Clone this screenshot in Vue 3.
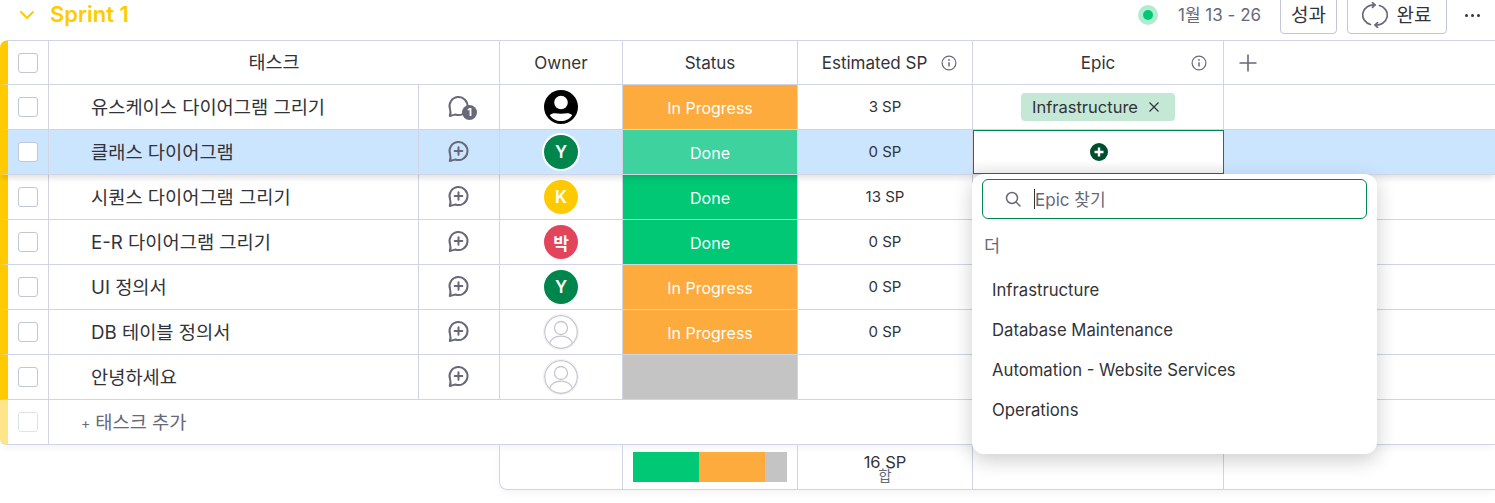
<template>
  <div class="page">
    <!-- group header -->
    <div class="topbar">
      <svg class="chevron" width="18" height="18" viewBox="0 0 18 18"><path d="M3 6l6 6 6-6" fill="none" stroke="#ffcb00" stroke-width="2" stroke-linecap="round" stroke-linejoin="round"/></svg>
      <span class="title">Sprint 1</span>
      <div class="spacer"></div>
      <span class="live"><span class="live-dot"></span></span>
      <span class="dates">1월 13 - 26</span>
      <button class="btn btn-result">성과</button>
      <button class="btn btn-done">
        <svg width="26" height="26" viewBox="0 0 26 26" fill="none" stroke="#676879" stroke-width="1.7" stroke-linecap="round" stroke-linejoin="round">
          <path d="M8.500 22.500A11 10 0 0 1 13 3"/>
          <path d="M10.500 .6l2.500 2.400-2.500 2.400"/>
          <path d="M17.500 3.500A11 10 0 0 1 13 23"/>
          <path d="M15.500 20.600l-2.500 2.400 2.500 2.400"/>
        </svg>
        <span>완료</span>
      </button>
      <span class="more"><i></i><i></i><i></i></span>
    </div>

    <!-- column titles -->
    <div class="row head">
      <div class="cell"><span class="check"></span></div>
      <div class="cell span-name title-ko">태스크</div>
      <div class="cell">Owner</div>
      <div class="cell">Status</div>
      <div class="cell with-info">
        <span>Estimated SP</span>
        <svg class="info" width="16" height="16" viewBox="0 0 16 16" fill="none" stroke="#676879" stroke-width="1.2"><circle cx="8" cy="8" r="6.9"/><path d="M8 7.2v4.2" stroke-width="1.5"/><circle cx="8" cy="4.9" r=".9" fill="#676879" stroke="none"/></svg>
      </div>
      <div class="cell epic-head">
        <span>Epic</span>
        <svg class="info abs-info" width="16" height="16" viewBox="0 0 16 16" fill="none" stroke="#676879" stroke-width="1.2"><circle cx="8" cy="8" r="6.9"/><path d="M8 7.2v4.2" stroke-width="1.5"/><circle cx="8" cy="4.9" r=".9" fill="#676879" stroke="none"/></svg>
      </div>
      <div class="cell last add-col">
        <svg width="20" height="20" viewBox="0 0 20 20" stroke="#676879" stroke-width="1.6"><path d="M10 1.5v17M1.5 10h17"/></svg>
      </div>
    </div>

    <!-- tasks -->
    <div v-for="(task, i) in tasks" :key="task.name" class="row" :class="{ selected: i === 1 }">
      <div class="cell"><span class="check"></span></div>
      <div class="cell name">{{ task.name }}</div>
      <div class="cell chat">
        <svg width="24" height="24" viewBox="0 0 24 24" fill="none" stroke="#676879" stroke-width="2" stroke-linecap="round" stroke-linejoin="round">
          <path d="M3 14A9 9 0 1 1 8.400 19.500C6.600 20 5 20.400 2.800 21C3.700 18.800 3.800 16.300 3 14Z"/>
          <path v-if="!task.comments" d="M11.500 7.200v7.600M7.700 11h7.600"/>
        </svg>
        <span v-if="task.comments" class="badge">{{ task.comments }}</span>
      </div>
      <div class="cell">
        <svg v-if="task.owner === 'me'" width="34" height="34" viewBox="0 0 34 34">
          <circle cx="17" cy="17" r="17" fill="#000"/>
          <circle cx="17" cy="12.500" r="6.800" fill="#fff"/>
          <path d="M5.800 25.200C9 22 13 23.800 17 23.800S25 22 28.200 25.200C25.800 28.900 21.600 31 17 31S8.200 28.900 5.800 25.200Z" fill="#fff"/>
        </svg>
        <svg v-else-if="task.owner === 'none'" class="ghost" width="34" height="34" viewBox="0 0 34 34" fill="none" stroke="#c5c7d0" stroke-width="1.300">
          <circle cx="17" cy="17" r="16.300"/>
          <circle cx="17" cy="13" r="6.500"/>
          <path d="M5.500 28.500C7.500 23 12 21.200 17 21.200S26.500 23 28.500 28.500"/>
        </svg>
        <span v-else class="avatar" :class="{ ring: i === 1 }" :style="{ background: task.color }">{{ task.owner }}</span>
      </div>
      <div class="cell status" :style="{ background: task.status ? statusColor(task.status, i) : '#c4c4c4' }">{{ task.status }}</div>
      <div class="cell sp">{{ task.sp }}</div>
      <div class="cell epic" :class="{ active: i === 1 }">
        <span v-if="i === 0" class="tag">
          Infrastructure
          <svg width="12" height="12" viewBox="0 0 12 12" stroke="#323338" stroke-width="1.200"><path d="M1.500 1.500l9 9M10.500 1.500l-9 9"/></svg>
        </span>
        <template v-if="i === 1">
          <svg width="20" height="20" viewBox="0 0 20 20"><circle cx="10" cy="10" r="9" fill="#004d2e"/><path d="M10 5.500v9M5.500 10h9" stroke="#fff" stroke-width="2.400"/></svg>
          <!-- epic picker -->
          <div class="popup">
            <div class="search">
              <svg width="18" height="18" viewBox="0 0 18 18" fill="none" stroke="#676879" stroke-width="1.500" stroke-linecap="round"><circle cx="8" cy="8" r="5.500"/><path d="M12 12l4 4"/></svg>
              <span class="caret"></span>
              <span class="placeholder">Epic 찾기</span>
            </div>
            <div class="more-label">더</div>
            <ul class="options">
              <li v-for="epic in epics" :key="epic">{{ epic }}</li>
            </ul>
          </div>
        </template>
      </div>
      <div class="cell last"></div>
    </div>

    <div class="row add">
      <div class="cell"><span class="check faded"></span></div>
      <div class="cell add-task"><small>+</small> 태스크 추가</div>
    </div>

    <!-- summary -->
    <div class="summary">
      <div class="cell"></div>
      <div class="cell bar-cell">
        <div class="bar">
          <span v-for="part in summary" :key="part.color" :style="{ width: part.width + 'px', background: part.color }"></span>
        </div>
      </div>
      <div class="cell total"><span>16 SP</span><small>합</small></div>
      <div class="cell"></div>
      <div class="cell last"></div>
    </div>
  </div>
</template>

<script setup>
const tasks = [
  { name: '유스케이스 다이어그램 그리기', comments: 1, owner: 'me', status: 'In Progress', sp: '3 SP' },
  { name: '클래스 다이어그램', owner: 'Y', color: '#00854d', status: 'Done', sp: '0 SP' },
  { name: '시퀀스 다이어그램 그리기', owner: 'K', color: '#ffcb00', status: 'Done', sp: '13 SP' },
  { name: 'E-R 다이어그램 그리기', owner: '박', color: '#e2445c', status: 'Done', sp: '0 SP' },
  { name: 'UI 정의서', owner: 'Y', color: '#00854d', status: 'In Progress', sp: '0 SP' },
  { name: 'DB 테이블 정의서', owner: 'none', status: 'In Progress', sp: '0 SP' },
  { name: '안녕하세요', owner: 'none', status: '', sp: '' },
]

const epics = ['Infrastructure', 'Database Maintenance', 'Automation - Website Services', 'Operations']

const summary = [
  { width: 66, color: '#00c875' },
  { width: 66, color: '#fdab3d' },
  { width: 22, color: '#c4c4c4' },
]

function statusColor(status, index) {
  if (status === 'Done') return index === 1 ? '#3dd29e' : '#00c875'
  return '#fdab3d'
}
</script>

<style>
html, body {
  margin: 0;
  background: #fff;
}
</style>

<style scoped>
.page {
  width: 1495px;
  height: 503px;
  overflow: hidden;
  font-family: "Inter", "Noto Sans CJK KR", sans-serif;
  color: #323338;
  font-size: 15px;
}

.topbar {
  height: 40px;
  display: flex;
  align-items: flex-start;
  overflow: hidden;
  padding-right: 15px;
  box-sizing: border-box;
}
.chevron {
  margin: 6px 0 0 18px;
}
.title {
  margin-left: 14px;
  font-size: 22px;
  line-height: 29px;
  font-weight: 600;
  color: #ffcb00;
}
.spacer {
  flex: 1;
}
.live {
  width: 20px;
  height: 20px;
  margin-top: 5px;
  border-radius: 50%;
  background: #b0ecd0;
  display: flex;
  align-items: center;
  justify-content: center;
}
.live-dot {
  width: 10px;
  height: 10px;
  border-radius: 50%;
  background: #00c875;
}
.dates {
  margin-left: 20px;
  width: 102px;
  font-size: 17px;
  line-height: 30px;
  color: #676879;
}
.btn {
  height: 42px;
  margin-top: -8px;
  border: 1px solid #c3c6d4;
  border-radius: 4px;
  background: #fff;
  font: inherit;
  font-size: 19px;
  color: #323338;
  display: flex;
  align-items: center;
  justify-content: center;
}
.btn-result {
  width: 57px;
  padding: 0;
}
.btn-done {
  width: 100px;
  margin-left: 10px;
  padding: 0 0 0 1px;
  gap: 9px;
}
.btn-done svg {
  margin: 3px 0 0 -2px;
}
.more {
  margin: 14px 0 0 18px;
  display: flex;
  gap: 3px;
}
.more i {
  width: 3px;
  height: 3px;
  border-radius: 50%;
  background: #323338;
}

.row {
  display: grid;
  grid-template-columns: 41px 370px 81px 123px 175px 175px 251px 1fr;
  height: 45px;
  box-sizing: border-box;
  border-left: 8px solid #ffcb00;
  border-bottom: 1px solid #d0d4e4;
}
.row.head {
  border-top: 1px solid #d0d4e4;
  border-top-left-radius: 8px;
}
.head .cell {
  font-size: 17px;
}
.head .title-ko {
  font-size: 18.500px;
  padding-bottom: 4px;
  box-sizing: border-box;
}
.span-name {
  grid-column: span 2;
}
.cell {
  border-right: 1px solid #d0d4e4;
  display: flex;
  align-items: center;
  justify-content: center;
  min-width: 0;
  position: relative;
}
.cell.last {
  border-right: 0;
}
.check {
  width: 20px;
  height: 20px;
  box-sizing: border-box;
  border: 1px solid #c3c6d4;
  border-radius: 3px;
  background: #fff;
}
.check.faded {
  opacity: 0.5;
}

.with-info {
  gap: 14px;
  padding-left: 9px;
  box-sizing: border-box;
}
.epic-head .abs-info {
  position: absolute;
  right: 16px;
}
.add-col {
  justify-content: flex-start;
  padding-left: 14px;
}

.selected {
  background: #cce5ff;
  box-shadow: 0 4px 6px -1px rgba(0, 0, 0, 0.12);
  position: relative;
  z-index: 2;
}
.name {
  justify-content: flex-start;
  padding: 0 0 3px 42px;
  box-sizing: border-box;
  font-size: 18.700px;
  color: #323338;
}
.badge {
  position: absolute;
  left: 43px;
  top: 20px;
  width: 15px;
  height: 15px;
  border-radius: 50%;
  background: #676879;
  color: #fff;
  font-size: 11px;
  font-weight: 700;
  line-height: 15px;
  text-align: center;
}
.avatar {
  width: 34px;
  height: 34px;
  border-radius: 50%;
  color: #fff;
  font-size: 17px;
  font-weight: 600;
  display: flex;
  align-items: center;
  justify-content: center;
}
.avatar.ring {
  box-shadow: 0 0 0 2px #fff;
}
.ghost {
  border-radius: 50%;
  box-shadow: 0 0 0 1px #f0f1f4;
  background: #fff;
}
.status {
  color: #fff;
  font-size: 16px;
  border-right: 1px solid #d0d4e4;
  padding-top: 2px;
  box-sizing: border-box;
}
.sp {
  font-size: 15px;
  padding-bottom: 2px;
  box-sizing: border-box;
}
.tag {
  height: 28px;
  padding: 0 15px 0 11px;
  border-radius: 4px;
  background: #c5e8d6;
  font-size: 16.500px;
  display: flex;
  align-items: center;
  gap: 10px;
}
.epic.active {
  background: linear-gradient(#fff 70%, #f3f3f3);
  border: 1px solid #00854d;
  box-sizing: border-box;
  padding-bottom: 1px;
}

.popup {
  position: absolute;
  left: -2px;
  top: 43px;
  width: 405px;
  height: 280px;
  box-sizing: border-box;
  padding: 5px 10px 0;
  border-radius: 12px;
  background: #fff;
  box-shadow: 0 6px 20px rgba(0, 0, 0, 0.2);
  z-index: 5;
}
.search {
  height: 40px;
  box-sizing: border-box;
  border: 1px solid #00854d;
  border-radius: 6px;
  display: flex;
  align-items: center;
  padding-left: 21px;
}
.caret {
  width: 1px;
  height: 20px;
  margin-left: 12px;
  background: #323338;
}
.placeholder {
  font-size: 17px;
  color: #676879;
  margin-top: -2px;
}
.more-label {
  margin: 15px 0 0 2px;
  font-size: 17.500px;
  line-height: 24px;
  color: #676879;
}
.options {
  list-style: none;
  margin: 12px 0 0;
  padding: 0 0 0 10px;
}
.options li {
  height: 40px;
  line-height: 40px;
  font-size: 16.700px;
}

.add {
  display: flex;
  border-left-color: #ffe58a;
  border-bottom-left-radius: 6px;
  box-shadow: 0 4px 8px -2px rgba(0, 0, 0, 0.06);
}
.add .cell:first-child {
  flex: none;
  width: 40px;
  box-sizing: content-box;
}
.add-task {
  border-right: 0;
  justify-content: flex-start;
  padding: 0 0 3px 32px;
  box-sizing: border-box;
  font-size: 18.700px;
  color: #676879;
}
.add-task small {
  font-size: 14px;
  margin-right: 5px;
  margin-top: 3px;
}

.summary {
  margin-left: 499px;
  height: 45px;
  box-sizing: border-box;
  display: grid;
  grid-template-columns: 123px 175px 175px 251px 1fr;
  border-left: 1px solid #d0d4e4;
  border-bottom: 1px solid #d0d4e4;
  border-bottom-left-radius: 8px;
  box-shadow: 0 4px 8px -2px rgba(0, 0, 0, 0.06);
}
.bar-cell {
  padding-bottom: 1px;
}
.bar {
  display: flex;
  height: 30px;
}
.total {
  flex-direction: column;
  font-size: 16.500px;
}
.total span {
  line-height: 18px;
}
.total small {
  font-size: 14.500px;
  line-height: 10px;
  color: #676879;
}
</style>
